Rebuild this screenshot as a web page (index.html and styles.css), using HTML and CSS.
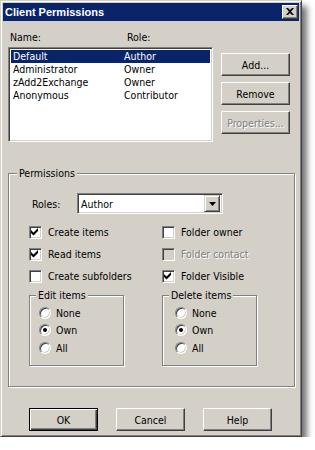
FILE: index.html
```html
<!DOCTYPE html>
<html lang="en">
<head>
  <meta charset="UTF-8">
  <title>Client Permissions</title>
  <link rel="stylesheet" href="styles.css">
</head>
<body>
  <div class="window">
    <div class="titlebar">
      <span class="title">Client Permissions</span>
      <span class="close-btn">
        <svg width="8" height="7" viewBox="0 0 8 7"><path d="M0 0h2l2 2 2-2h2L5 3.5 8 7H6L4 5 2 7H0l3-3.5z" fill="#000"/></svg>
      </span>
    </div>

    <div class="content">
      <div class="top">
        <div class="list-col">
          <div class="list-head">
            <span class="col-name">Name:</span>
            <span>Role:</span>
          </div>
          <div class="listbox">
            <div class="row selected"><span class="col-name">Default</span><span>Author</span></div>
            <div class="row"><span class="col-name">Administrator</span><span>Owner</span></div>
            <div class="row"><span class="col-name">zAdd2Exchange</span><span>Owner</span></div>
            <div class="row"><span class="col-name">Anonymous</span><span>Contributor</span></div>
          </div>
        </div>
        <div class="side-buttons">
          <button class="btn">Add...</button>
          <button class="btn">Remove</button>
          <button class="btn disabled">Properties...</button>
        </div>
      </div>

      <fieldset class="group perms">
        <legend>Permissions</legend>
        <div class="roles-row">
          <span class="roles-label">Roles:</span>
          <div class="combo">
            <span class="combo-value">Author</span>
            <span class="combo-arrow">
              <svg width="7" height="4" viewBox="0 0 7 4"><path d="M0 0h7L3.5 4z" fill="#000"/></svg>
            </span>
          </div>
        </div>

        <div class="options">
          <div class="opt"><span class="check on"></span>Create items</div>
          <div class="opt"><span class="check"></span>Folder owner</div>
          <div class="opt"><span class="check on"></span>Read items</div>
          <div class="opt disabled"><span class="check"></span>Folder contact</div>
          <div class="opt"><span class="check"></span>Create subfolders</div>
          <div class="opt"><span class="check on"></span>Folder Visible</div>

          <fieldset class="group sub edit">
            <legend>Edit items</legend>
            <div class="radio-row"><span class="radio"></span>None</div>
            <div class="radio-row"><span class="radio on"></span>Own</div>
            <div class="radio-row"><span class="radio"></span>All</div>
          </fieldset>
          <fieldset class="group sub delete">
            <legend>Delete items</legend>
            <div class="radio-row"><span class="radio"></span>None</div>
            <div class="radio-row"><span class="radio on"></span>Own</div>
            <div class="radio-row"><span class="radio"></span>All</div>
          </fieldset>
        </div>
      </fieldset>

      <div class="bottom-buttons">
        <button class="btn default">OK</button>
        <button class="btn">Cancel</button>
        <button class="btn">Help</button>
      </div>
    </div>
  </div>
</body>
</html>
```

FILE: styles.css
```css
:root {
  --face: #d4d0c8;
  --shade: #808080;
  --dark: #404040;
  --title: #0a246a;
}

body {
  margin: 0;
  background: #fff;
  font-family: "DejaVu Sans Condensed", "DejaVu Sans", sans-serif;
  font-size: 10.5px;
  color: #000;
}

.window {
  box-sizing: border-box;
  width: 302px;
  height: 437px;
  padding: 2px;
  background: var(--face);
  border: 1px solid;
  border-color: var(--face) var(--dark) var(--dark) var(--face);
  box-shadow: inset 1px 1px #fff, inset -1px -1px var(--shade), 5px 6px 6px rgba(0,0,0,0.55);
}

/* title bar */
.titlebar {
  height: 18px;
  background: var(--title);
  display: flex;
  align-items: center;
  justify-content: space-between;
  padding: 0 1px 0 2px;
}

.title {
  color: #fff;
  font-family: "Liberation Sans", sans-serif;
  font-weight: 700;
  font-size: 11px;
}

.close-btn {
  box-sizing: border-box;
  width: 16px;
  height: 14px;
  background: var(--face);
  border: 1px solid;
  border-color: #fff var(--dark) var(--dark) #fff;
  box-shadow: inset -1px -1px var(--shade);
  display: flex;
  align-items: center;
  justify-content: center;
  padding: 0 1px 1px 0;
}

.close-btn svg {
  display: block;
}

.content {
  padding: 10px 5px 0 5px;
}

/* list + side buttons */
.top {
  display: flex;
}

.list-col {
  width: 205px;
}

.list-head {
  display: flex;
  height: 13px;
  line-height: 13px;
  padding-left: 2px;
  margin-bottom: 3px;
}

.list-head .col-name {
  width: 117px;
}

.listbox {
  box-sizing: border-box;
  height: 95px;
  background: #fff;
  padding: 1px;
  border: 1px solid;
  border-color: var(--shade) #fff #fff var(--shade);
  box-shadow: inset 1px 1px var(--dark), inset -1px -1px var(--face);
  padding: 2px;
}

.row {
  display: flex;
  height: 13px;
  line-height: 13px;
  padding-left: 2px;
}

.row .col-name {
  width: 111px;
}

.row.selected {
  background: var(--title);
  color: #fff;
}

.side-buttons {
  display: flex;
  flex-direction: column;
  gap: 6px;
  margin-left: 8px;
  padding-top: 22px;
}

.btn {
  box-sizing: border-box;
  width: 69px;
  height: 23px;
  padding: 0;
  font: inherit;
  color: #000;
  background: var(--face);
  border: 1px solid;
  border-color: #fff var(--dark) var(--dark) #fff;
  box-shadow: inset -1px -1px var(--shade);
}

.btn.disabled {
  color: var(--shade);
  text-shadow: 1px 1px #fff;
}

.btn.default {
  border-color: #000;
  box-shadow: inset 1px 1px #fff, inset -1px -1px var(--dark), inset -2px -2px var(--shade);
}

/* group boxes */
.group {
  margin: 0;
  padding: 0;
  min-width: 0;
  border: 1px solid var(--shade);
  box-shadow: inset 1px 1px #fff, 1px 1px #fff;
}

.group legend {
  padding: 0 2px;
  line-height: 13px;
  background: var(--face);
}

.perms {
  width: 285px;
  margin-top: 25px;
  padding-bottom: 11px;
}

.perms > legend {
  margin-left: 8px;
}

.roles-row {
  display: flex;
  align-items: center;
  padding: 13px 0 0 23px;
}

.roles-label {
  width: 45px;
}

.combo {
  box-sizing: border-box;
  width: 146px;
  height: 21px;
  background: #fff;
  display: flex;
  align-items: center;
  justify-content: space-between;
  padding: 0 2px 0 3px;
  border: 1px solid;
  border-color: var(--shade) #fff #fff var(--shade);
  box-shadow: inset 1px 1px var(--dark), inset -1px -1px var(--face);
}

.combo-arrow {
  box-sizing: border-box;
  width: 16px;
  height: 17px;
  background: var(--face);
  border: 1px solid;
  border-color: var(--face) var(--dark) var(--dark) var(--face);
  box-shadow: inset 1px 1px #fff, inset -1px -1px var(--shade);
  display: flex;
  align-items: center;
  justify-content: center;
}

.combo-arrow svg {
  display: block;
}

.options {
  display: grid;
  grid-template-columns: 133px 1fr;
  grid-auto-rows: 22px;
  margin-top: 7px;
  padding-left: 20px;
}

.opt {
  display: flex;
  align-items: center;
  gap: 6px;
}

.opt.disabled {
  color: var(--shade);
  text-shadow: 1px 1px #fff;
}

.check {
  box-sizing: border-box;
  width: 13px;
  height: 13px;
  background: #fff;
  border: 1px solid;
  border-color: var(--shade) #fff #fff var(--shade);
  box-shadow: inset 1px 1px var(--dark), inset -1px -1px var(--face);
}

.opt.disabled .check {
  background: var(--face);
}

.check.on {
  background: #fff url("data:image/svg+xml,%3Csvg xmlns='http://www.w3.org/2000/svg' width='11' height='11'%3E%3Cpath d='M2 4l2.5 2.5L9 2v3l-4.5 4.5L2 7z'/%3E%3C/svg%3E") no-repeat -1px -1px;
}

.sub {
  width: 95px;
  box-sizing: border-box;
  margin-top: 2px;
  padding: 2px 0 8px 9px;
  grid-row: span 4;
  align-self: start;
}

.sub.delete {
  padding-left: 12px;
}

.sub > legend {
  margin-left: -3px;
}

.sub.delete > legend {
  margin-left: -6px;
}

.radio-row {
  display: flex;
  align-items: center;
  gap: 5px;
  height: 17.5px;
}

.radio {
  position: relative;
  box-sizing: border-box;
  width: 12px;
  height: 12px;
  border-radius: 50%;
  background: #fff;
  border: 1px solid;
  border-color: var(--shade) #fff #fff var(--shade);
  box-shadow: inset 1px 1px var(--dark), inset -1px -1px var(--face);
}

.radio.on::after {
  content: "";
  position: absolute;
  left: 3px;
  top: 3px;
  width: 4px;
  height: 4px;
  border-radius: 50%;
  background: #000;
}

.bottom-buttons {
  display: flex;
  gap: 18px;
  margin-top: 21px;
  padding-left: 21px;
}
```
